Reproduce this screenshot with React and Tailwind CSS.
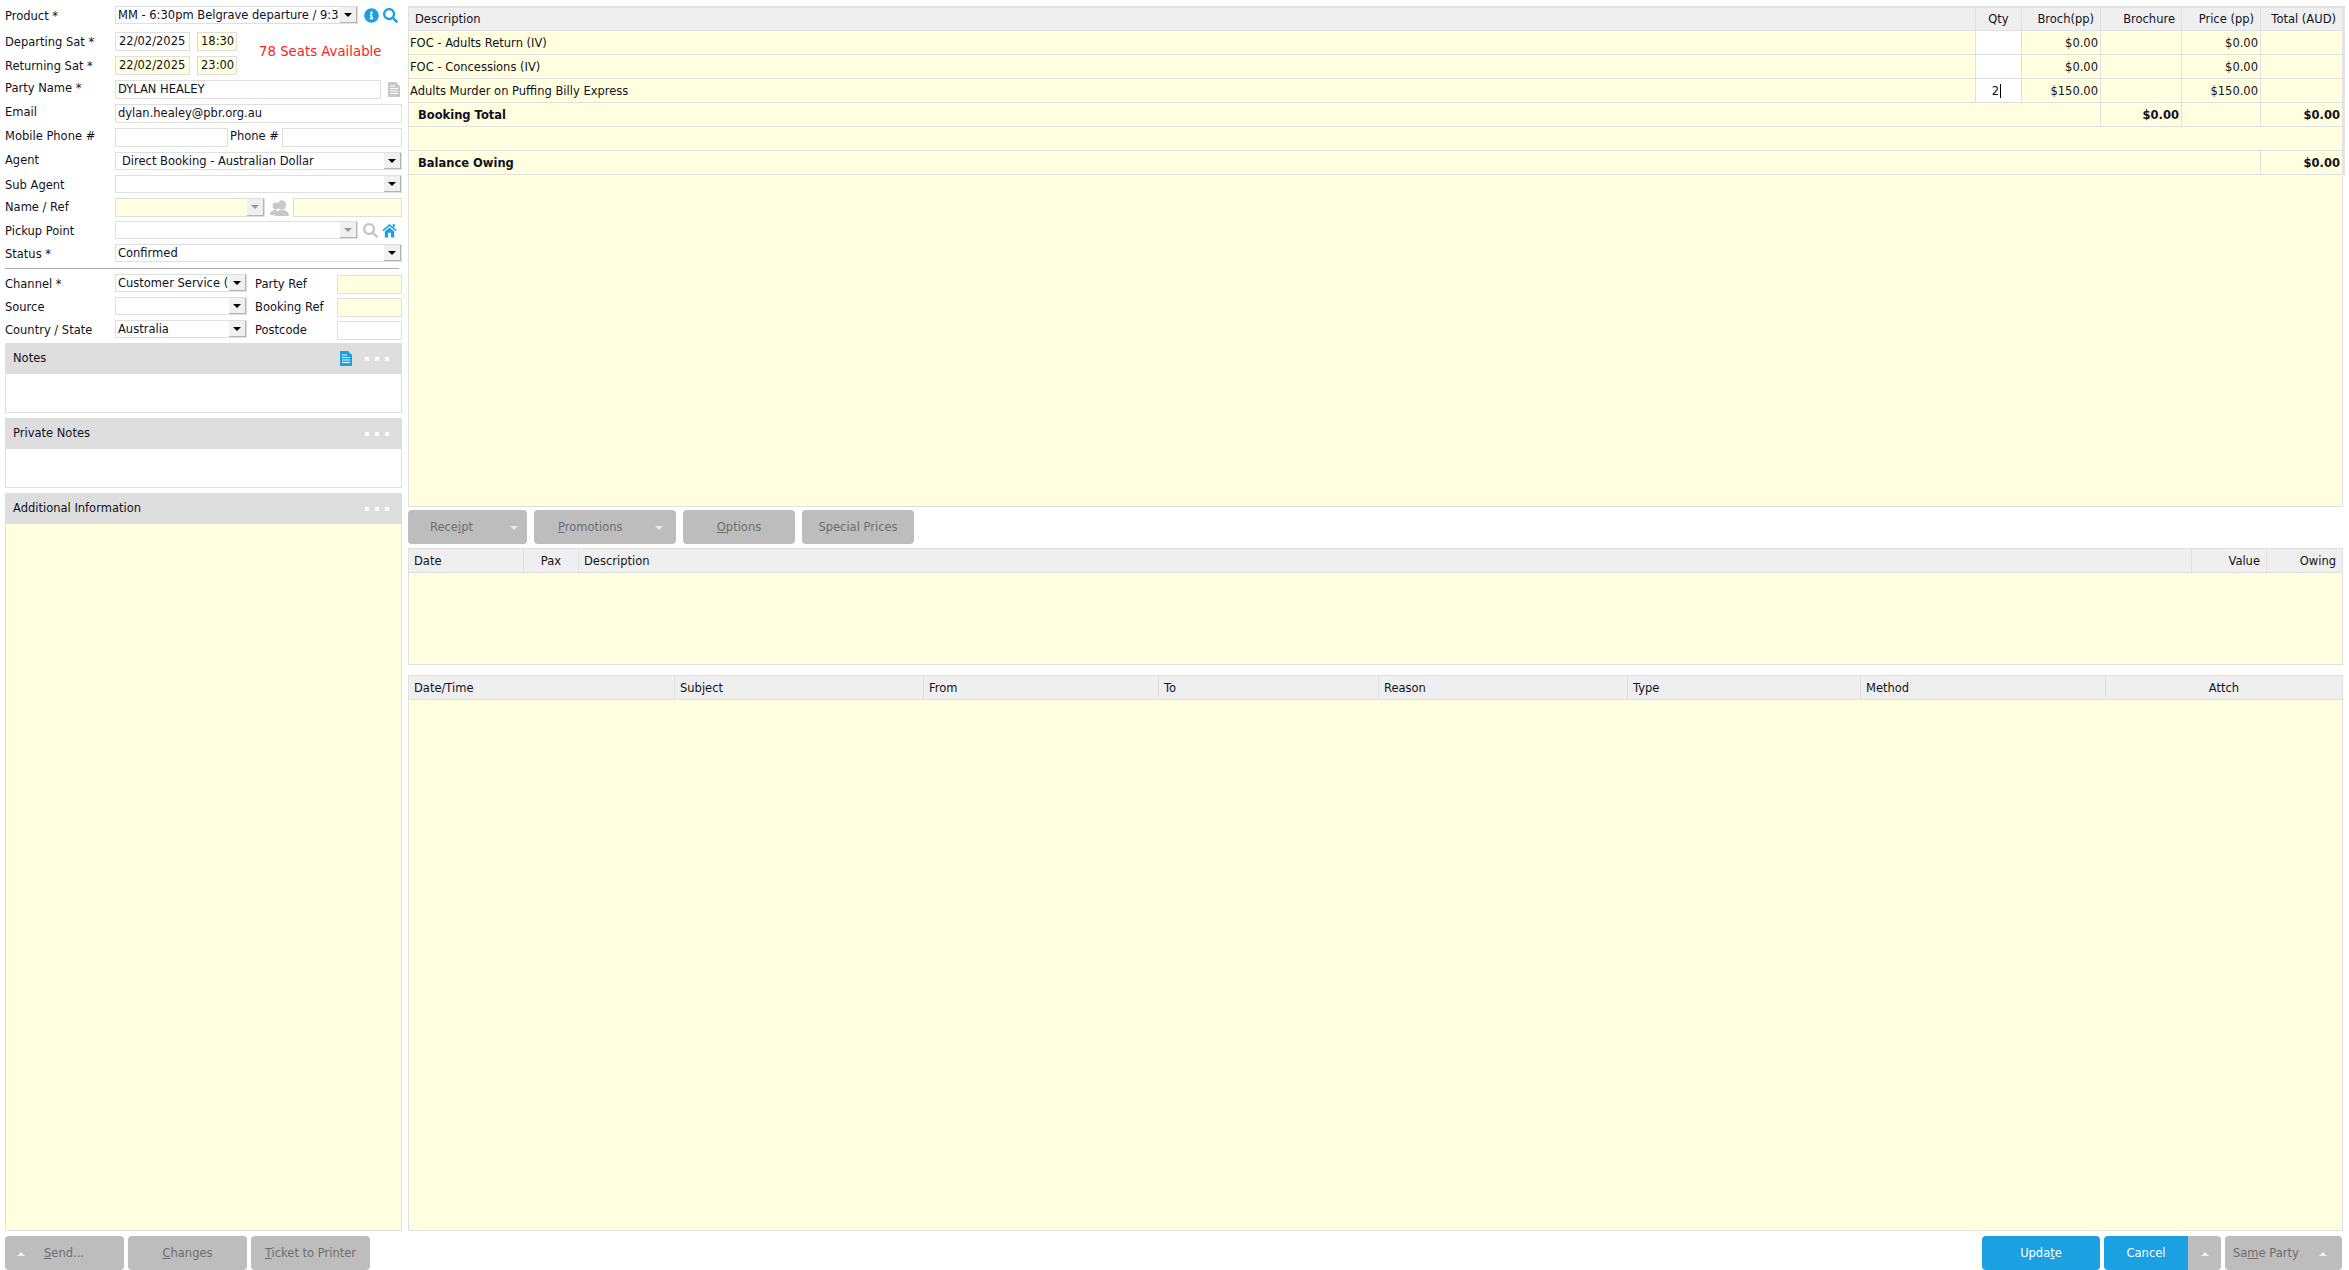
import { FaInfoCircle, FaSearch } from "react-icons/fa";

const yellow = "bg-[#ffffe0]";

const Field = ({ className = "", yellowBg, children }) => (
  <div
    className={`border border-[#dfdfdf] h-full overflow-hidden whitespace-nowrap leading-[17px] ${yellowBg ? yellow : "bg-white"} ${className}`}
  >
    {children}
  </div>
);

const Select = ({ className = "", yellowBg, disabled, children }) => (
  <div
    className={`border border-[#dfdfdf] h-full flex overflow-hidden whitespace-nowrap ${yellowBg ? yellow : "bg-white"} ${className}`}
  >
    <div className="flex-1 min-w-0 overflow-hidden pl-[2px] leading-[16px]">{children}</div>
    <div className="w-[17px] h-full shrink-0 bg-[#f0f0f0] border-r border-b border-[#b4b4b4] flex items-center justify-center">
      <div
        className={`w-0 h-0 border-x-[4px] border-x-transparent border-t-[4px] ${disabled ? "border-t-[#999999]" : "border-t-black"}`}
      />
    </div>
  </div>
);

const Row = ({ label, labelPad, h, inner, children }) => (
  <div className={`flex shrink-0 ${h}`}>
    <div className={`w-[110px] shrink-0 whitespace-nowrap leading-[15px] ${labelPad}`}>{label}</div>
    <div className={`flex-1 min-w-0 flex ${inner}`}>{children}</div>
  </div>
);

const Dots = () => (
  <div className="flex gap-[6px] mr-[13px]">
    <div className="w-[4px] h-[4px] bg-white" />
    <div className="w-[4px] h-[4px] bg-white" />
    <div className="w-[4px] h-[4px] bg-white" />
  </div>
);

const Panel = ({ title, icon, body, className = "" }) => (
  <div className={`flex flex-col ${className}`}>
    <div className="h-[31px] shrink-0 bg-[#dedede] flex items-center pl-[8px]">
      <span className="flex-1">{title}</span>
      {icon}
      <Dots />
    </div>
    <div className={`flex-1 border border-t-0 border-[#dfdfdf] ${body}`} />
  </div>
);

const Up = () => (
  <div className="w-0 h-0 border-x-[4px] border-x-transparent border-b-[4px] border-b-[#eeeeee]" />
);

const Down = () => (
  <div className="w-0 h-0 border-x-[4px] border-x-transparent border-t-[4px] border-t-[#e8e8e8]" />
);

const Btn = ({ className = "", blue, children }) => (
  <div
    className={`h-[34px] pt-[2px] rounded-[4px] flex items-center shrink-0 whitespace-nowrap ${blue ? "bg-[#1ba1e2] text-white" : "bg-[#bdbdbd] text-[#6e6e6e]"} ${className}`}
  >
    {children}
  </div>
);

const HomeIcon = () => (
  <svg viewBox="0 0 16 16" className="w-[15px] h-[15px]" fill="#1ba1e2">
    <path d="M0.5 7.5 L8 1 L15.5 7.5 L14.4 8.8 L8 3.3 L1.6 8.8 Z" />
    <rect x="11.5" y="1" width="2" height="3.5" />
    <path d="M3 9 L8 4.8 L13 9 V15.5 H9.6 V10.5 H6.4 V15.5 H3 Z" />
  </svg>
);

const DocIcon = ({ className }) => (
  <svg viewBox="0 0 12 15" className={`w-[12px] h-[15px] ${className}`}>
    <path d="M0 0 H8 L12 4 V15 H0 Z" fill="currentColor" />
    <path d="M2 4 H7 M2 6.5 H10 M2 9 H10 M2 11.5 H10" stroke="white" strokeWidth="1" />
  </svg>
);

const PeopleIcon = () => (
  <svg viewBox="0 0 19 16" className="w-[19px] h-[16px] ml-[5px] mr-[4px] shrink-0" fill="#c8c8c8">
    <circle cx="6" cy="6" r="3.4" />
    <path d="M0 15 C0 11 3 10 6 9.5 L8 15 Z" />
    <ellipse cx="12" cy="5" rx="4" ry="4.8" />
    <path d="M4.5 16 C4.5 12 8 10.8 10 10 H14 C16 10.8 19 12 19 16 Z" />
  </svg>
);

const Cell = ({ className = "", children }) => (
  <div className={`h-full border-r border-[#e0e0e0] whitespace-nowrap shrink-0 ${className}`}>
    {children}
  </div>
);

const priceRows = [
  { desc: "FOC - Adults Return (IV)", qty: "", broch: "$0.00", price: "$0.00" },
  { desc: "FOC - Concessions (IV)", qty: "", broch: "$0.00", price: "$0.00" },
  { desc: "Adults Murder on Puffing Billy Express", qty: "2", broch: "$150.00", price: "$150.00" },
];

const gridRow = "h-[24px] flex border-b border-[#e0e0e0] leading-[24px]";

const App = () => {
  return (
    <div
      className="w-[2349px] h-[1270px] overflow-hidden bg-white flex flex-col text-[11.5px] text-[#111122]"
      style={{ fontFamily: '"DejaVu Sans", Verdana, sans-serif' }}
    >
      <div className="flex-1 min-h-0 flex pl-[5px] pr-[6px] gap-[6px]">
        {/* Booking form */}
        <div className="w-[397px] shrink-0 flex flex-col pt-[6px]">
          <Row label="Product *" labelPad="pt-[3px]" h="h-[26px]" inner="h-[18px] items-center">
            <Select className="w-[243px]">MM - 6:30pm Belgrave departure / 9:3</Select>
            <FaInfoCircle className="ml-[6px] w-[15px] h-[15px] text-[#1ba1e2]" />
            <FaSearch className="ml-[4px] w-[15px] h-[15px] text-[#1ba1e2]" />
          </Row>
          <div className="flex shrink-0">
            <div className="flex flex-col">
              <Row label="Departing Sat *" labelPad="pt-[3px]" h="h-[24px]" inner="h-[19px] gap-[7px]">
                <Field className="w-[75px] pl-[3px]">22/02/2025</Field>
                <Field yellowBg className="w-[40px] pl-[3px]">18:30</Field>
              </Row>
              <Row label="Returning Sat *" labelPad="pt-[3px]" h="h-[24px]" inner="h-[19px] gap-[7px]">
                <Field yellowBg className="w-[75px] pl-[3px]">22/02/2025</Field>
                <Field yellowBg className="w-[40px] pl-[3px]">23:00</Field>
              </Row>
            </div>
            <div className="ml-[22px] mt-[12px] text-[13.3px] leading-[16px] text-[#ff2020] whitespace-nowrap">
              78 Seats Available
            </div>
          </div>
          <Row label="Party Name *" labelPad="pt-[1px]" h="h-[24px]" inner="h-[19px] items-center">
            <Field className="w-[266px] pl-[2px]">DYLAN HEALEY</Field>
            <DocIcon className="ml-[7px] text-[#c8c8c8]" />
          </Row>
          <Row label="Email" labelPad="pt-[1px]" h="h-[24px]" inner="h-[19px]">
            <Field className="w-full pl-[2px]">dylan.healey@pbr.org.au</Field>
          </Row>
          <Row label="Mobile Phone #" labelPad="pt-[1px]" h="h-[24px]" inner="h-[19px]">
            <Field className="w-[113px]" />
            <div className="w-[54px] pl-[2px] pt-[1px] leading-[15px] whitespace-nowrap">Phone #</div>
            <Field className="flex-1" />
          </Row>
          <Row label="Agent" labelPad="pt-[1px]" h="h-[23px]" inner="h-[18px]">
            <Select className="w-full"><span className="pl-[4px]">Direct Booking - Australian Dollar</span></Select>
          </Row>
          <Row label="Sub Agent" labelPad="pt-[3px]" h="h-[23px]" inner="h-[18px]">
            <Select className="w-full" />
          </Row>
          <Row label="Name / Ref" labelPad="pt-[2px]" h="h-[23px]" inner="h-[19px] items-center">
            <Select yellowBg disabled className="w-[150px]" />
            <PeopleIcon />
            <Field yellowBg className="flex-1" />
          </Row>
          <Row label="Pickup Point" labelPad="pt-[3px]" h="h-[23px]" inner="h-[18px] items-center">
            <Select disabled className="w-[243px]" />
            <FaSearch className="ml-[5px] w-[15px] h-[15px] text-[#c8c8c8]" />
            <div className="ml-[4px]"><HomeIcon /></div>
          </Row>
          <Row label="Status *" labelPad="pt-[3px]" h="h-[24px]" inner="h-[18px]">
            <Select className="w-full">Confirmed</Select>
          </Row>
          <div className="h-px w-[394px] bg-[#aaaaaa] shrink-0" />
          <div className="h-[5px] shrink-0" />

          <div className="flex flex-col shrink-0">
            {[
              { label: "Channel *", value: "Customer Service (", ref: "Party Ref", yellowBg: true },
              { label: "Source", value: "", ref: "Booking Ref", yellowBg: true },
              { label: "Country / State", value: "Australia", ref: "Postcode", yellowBg: false },
            ].map((r) => (
              <div key={r.label} className="flex h-[23px]">
                <div className="w-[110px] pt-[3px] leading-[15px] whitespace-nowrap">{r.label}</div>
                <div className="w-[132px] h-[18px]">
                  <Select className="w-full">{r.value}</Select>
                </div>
                <div className="w-[90px] pl-[8px] pt-[3px] leading-[15px] whitespace-nowrap">{r.ref}</div>
                <div className="flex-1 h-[19px] mt-[1px]">
                  <Field yellowBg={r.yellowBg} className="w-full" />
                </div>
              </div>
            ))}
          </div>

          <Panel
            title="Notes"
            className="h-[70px] shrink-0"
            body="bg-white"
            icon={<DocIcon className="mr-[13px] text-[#1ba1e2]" />}
          />
          <div className="h-[5px] shrink-0" />
          <Panel title="Private Notes" className="h-[70px] shrink-0" body="bg-white" />
          <div className="h-[5px] shrink-0" />
          <Panel title="Additional Information" className="flex-1 min-h-0" body={yellow} />
        </div>

        {/* Grids */}
        <div className="flex-1 min-w-0 flex flex-col pt-[6px]">
          <div className={`h-[501px] shrink-0 border border-[#e0e0e0] border-t-0 ${yellow}`}>
            <div className="border-r-[3px] border-[#e3e3e3] -mr-[3px] border-t-2 border-t-[#e0e0e0]">
              <div className="h-[23px] flex border-b border-[#e0e0e0] leading-[22px] bg-[#efefef]">
                <Cell className="flex-1 pl-[6px]">Description</Cell>
                <Cell className="w-[46px] text-center">Qty</Cell>
                <Cell className="w-[79px] text-right pr-[6px]">Broch(pp)</Cell>
                <Cell className="w-[81px] text-right pr-[6px]">Brochure</Cell>
                <Cell className="w-[79px] text-right pr-[6px]">Price (pp)</Cell>
                <Cell className="w-[81px] text-right pr-[6px] border-r-0">Total (AUD)</Cell>
              </div>
              {priceRows.map((r) => (
                <div key={r.desc} className={gridRow}>
                  <Cell className="flex-1 pl-[1px]">{r.desc}</Cell>
                  <Cell className="w-[46px] bg-white text-right pr-[20px]">
                    {r.qty && <span className="border-r border-black pr-px">{r.qty}</span>}
                  </Cell>
                  <Cell className="w-[79px] text-right pr-[2px]">{r.broch}</Cell>
                  <Cell className="w-[81px]" />
                  <Cell className="w-[79px] text-right pr-[2px]">{r.price}</Cell>
                  <Cell className="w-[81px] border-r-0" />
                </div>
              ))}
              <div className={`${gridRow} font-bold`}>
                <Cell className="flex-1 pl-[9px]">Booking Total</Cell>
                <Cell className="w-[81px] text-right pr-[2px]">$0.00</Cell>
                <Cell className="w-[79px]" />
                <Cell className="w-[81px] text-right pr-[2px] border-r-0">$0.00</Cell>
              </div>
              <div className={gridRow} />
              <div className={`${gridRow} font-bold`}>
                <Cell className="flex-1 pl-[9px]">Balance Owing</Cell>
                <Cell className="w-[81px] text-right pr-[2px] border-r-0">$0.00</Cell>
              </div>
            </div>
          </div>

          <div className="flex gap-[7px] mt-[3px] h-[34px] shrink-0">
            <Btn className="w-[119px] pl-[22px]">
              <span>Rece<span className="underline">i</span>pt</span>
              <div className="ml-[37px]"><Down /></div>
            </Btn>
            <Btn className="w-[142px] pl-[24px]">
              <span><span className="underline">P</span>romotions</span>
              <div className="ml-[32px]"><Down /></div>
            </Btn>
            <Btn className="w-[112px] justify-center"><span><span className="underline">O</span>ptions</span></Btn>
            <Btn className="w-[112px] justify-center">Special Prices</Btn>
          </div>

          <div className={`mt-[4px] h-[117px] shrink-0 border border-[#e0e0e0] ${yellow}`}>
            <div className={`${gridRow} bg-[#efefef]`}>
              <Cell className="w-[115px] pl-[5px]">Date</Cell>
              <Cell className="w-[55px] text-right pr-[17px]">Pax</Cell>
              <Cell className="flex-1 pl-[5px]">Description</Cell>
              <Cell className="w-[75px] text-right pr-[6px]">Value</Cell>
              <Cell className="w-[75px] text-right pr-[6px] border-r-0">Owing</Cell>
            </div>
          </div>

          <div className={`mt-[10px] flex-1 min-h-0 border border-[#e0e0e0] ${yellow}`}>
            <div className={`${gridRow} bg-[#efefef]`}>
              <Cell className="w-[266px] pl-[5px]">Date/Time</Cell>
              <Cell className="w-[249px] pl-[5px]">Subject</Cell>
              <Cell className="w-[235px] pl-[5px]">From</Cell>
              <Cell className="w-[220px] pl-[5px]">To</Cell>
              <Cell className="w-[249px] pl-[5px]">Reason</Cell>
              <Cell className="w-[233px] pl-[5px]">Type</Cell>
              <Cell className="w-[245px] pl-[5px]">Method</Cell>
              <Cell className="flex-1 text-center border-r-0">Attch</Cell>
            </div>
          </div>
        </div>
      </div>

      {/* Footer buttons */}
      <div className="h-[34px] mt-[5px] shrink-0 flex pl-[5px] pr-[7px] gap-[4px]">
        <Btn className="w-[119px] pl-[12px]">
          <Up />
          <span className="ml-[19px]"><span className="underline">S</span>end...</span>
        </Btn>
        <Btn className="w-[119px] justify-center"><span><span className="underline">C</span>hanges</span></Btn>
        <Btn className="w-[119px] justify-center"><span><span className="underline">T</span>icket to Printer</span></Btn>
        <div className="flex-1" />
        <Btn blue className="w-[118px] justify-center"><span>Upda<span className="underline">t</span>e</span></Btn>
        <div className="w-[117px] h-[34px] flex rounded-[4px] overflow-hidden shrink-0">
          <div className="w-[84px] pt-[2px] bg-[#1ba1e2] text-white flex items-center justify-center">Cancel</div>
          <div className="flex-1 pt-[2px] bg-[#bdbdbd] flex items-center justify-center"><Up /></div>
        </div>
        <Btn className="w-[117px] pl-[8px]">
          <span>Sa<span className="underline">m</span>e Party</span>
          <div className="ml-[20px]"><Up /></div>
        </Btn>
      </div>
    </div>
  );
};

export default App;
